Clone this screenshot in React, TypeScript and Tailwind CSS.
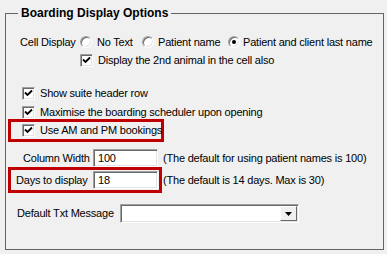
import type { ReactNode } from 'react'

// ─── Classic Win32-style controls ─────────────────────────────────────────────

const sunken =
  'border border-t-[#a0a0a0] border-l-[#a0a0a0] border-b-white border-r-white shadow-[inset_1px_1px_0_#696969,inset_-1px_-1px_0_#e3e3e3]'

function CheckBox() {
  return (
    <span className={`flex size-[13px] shrink-0 items-center justify-center bg-white ${sunken}`}>
      <svg width="9" height="9" viewBox="0 0 9 9">
        <path d="M1 3.5 L3.5 6 L8 1.5" fill="none" stroke="#000" strokeWidth="1.8" />
      </svg>
    </span>
  )
}

function Radio({ checked }: { checked?: boolean }) {
  return (
    <span className="relative flex size-[12px] shrink-0 items-center justify-center rounded-full border border-t-[#a0a0a0] border-l-[#a0a0a0] border-b-white border-r-white bg-white shadow-[inset_1px_1px_0_#696969,inset_-1px_-1px_0_#e3e3e3]">
      {checked && <span className="size-[4px] rounded-full bg-black" />}
    </span>
  )
}

function TextBox({ value, w }: { value: string; w: string }) {
  return (
    <div className={`flex h-[18px] ${w} shrink-0 items-center bg-white pl-[4px] ${sunken}`}>
      {value}
    </div>
  )
}

function CheckRow({ children, className }: { children: ReactNode; className?: string }) {
  return (
    <div className={`flex h-[14px] items-center gap-[5px] ${className ?? ''}`}>
      <CheckBox />
      <span>{children}</span>
    </div>
  )
}

export default function App() {
  return (
    <div
      className="h-[254px] w-[387px] overflow-hidden whitespace-nowrap bg-[#f0f0f0] pt-[13px] pl-[5px] text-[11px] leading-[13px] tracking-[-0.2px] text-black"
      style={{ fontFamily: '"Liberation Sans", Arial, sans-serif' }}
    >
      <div className="relative flex h-[237px] w-[379px] flex-col border border-[#646464]">
        {/* group caption sits over the top border */}
        <span className="absolute -top-[8px] left-[12px] bg-[#f0f0f0] px-[3px] text-[12px] leading-[14px] font-bold tracking-normal">
          Boarding Display Options
        </span>

        {/* Cell Display radios */}
        <div className="mt-[21px] flex h-[14px] items-center pl-[14px]">
          <span className="w-[60px]">Cell Display</span>
          <span className="flex w-[62px] items-center gap-[5px]">
            <Radio />
            No Text
          </span>
          <span className="flex w-[86px] items-center gap-[4px]">
            <Radio />
            Patient name
          </span>
          <span className="flex items-center gap-[3px]">
            <Radio checked />
            Patient and client last name
          </span>
        </div>

        <CheckRow className="mt-[4px] ml-[74px] gap-[4px]">Display the 2nd animal in the cell also</CheckRow>

        <CheckRow className="mt-[19px] ml-[16px]">Show suite header row</CheckRow>
        <CheckRow className="mt-[5px] ml-[16px]">Maximise the boarding scheduler upon opening</CheckRow>

        <div className="mt-0 ml-[2px] flex h-[23px] w-[156px] items-center border-[3px] border-[#c00000] pl-[11px]">
          <CheckRow>Use AM and PM bookings</CheckRow>
        </div>

        {/* Column width */}
        <div className="mt-[7px] ml-[17px] flex items-center">
          <span className="w-[70px]">Column Width</span>
          <TextBox value="100" w="w-[65px]" />
          <span className="ml-[5px]">(The default for using patient names is 100)</span>
        </div>

        {/* Days to display */}
        <div className="ml-[2px] flex items-center">
          <div className="flex h-[26px] w-[154px] items-center border-[3px] border-[#c00000] pl-[5px]">
            <span className="w-[77px]">Days to display</span>
            <TextBox value="18" w="w-[65px]" />
          </div>
          <span className="ml-[1px]">(The default is 14 days. Max is 30)</span>
        </div>

        {/* Default txt message combo */}
        <div className="mt-[11px] ml-[11px] flex items-center">
          <span className="w-[103px]">Default Txt Message</span>
          <div className={`flex h-[19px] w-[179px] items-stretch justify-end bg-white p-[1px] ${sunken}`}>
            <div className="flex w-[17px] items-center justify-center border border-t-white border-l-white border-b-[#696969] border-r-[#696969] bg-[#f0f0f0]">
              <svg width="7" height="4" viewBox="0 0 7 4">
                <path d="M0 0 H7 L3.5 4 Z" fill="#000" />
              </svg>
            </div>
          </div>
        </div>
      </div>
    </div>
  )
}
